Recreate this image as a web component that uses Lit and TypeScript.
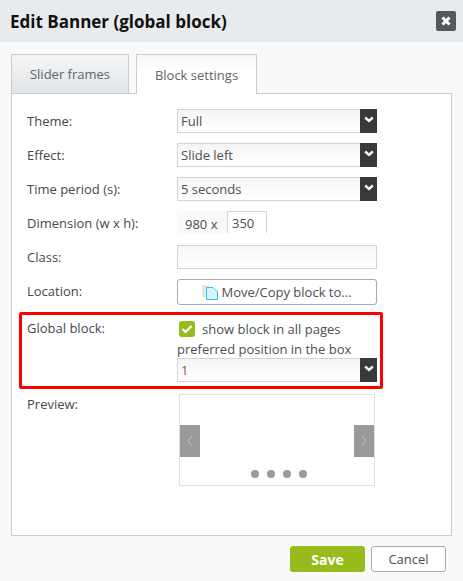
import { LitElement, html, css } from 'lit';
import { customElement } from 'lit/decorators.js';

const chevron = html`<svg width="12" height="8" viewBox="0 0 12 8"><path d="M2.2 1.5 L6 4.8 L9.8 1.5" fill="none" stroke="#fff" stroke-width="2.4"/></svg>`;

@customElement('app-root')
export class AppRoot extends LitElement {
  static styles = css`
    :host {
      display: block;
      width: 463px;
      height: 581px;
      background: #f9f9f9;
      font-family: 'Open Sans', sans-serif;
      font-size: 13px;
      color: #4a4f55;
      overflow: hidden;
    }
    .header {
      height: 42px;
      background: #e8ebee;
      display: flex;
      align-items: center;
      justify-content: space-between;
      padding: 0 7px 0 10px;
    }
    .title {
      font-size: 17px;
      font-weight: 700;
      color: #111;
    }
    .close {
      width: 20px;
      height: 20px;
      background: #54575b;
      border-radius: 2px;
      display: flex;
      align-items: center;
      justify-content: center;
    }
    .tabs {
      display: flex;
      gap: 7px;
      padding: 12px 0 0 11px;
      height: 39px;
    }
    .tab {
      box-sizing: border-box;
      height: 39px;
      border: 1px solid #ccc;
      border-bottom: none;
      display: flex;
      align-items: center;
      justify-content: center;
      font-size: 13px;
      color: #5f646a;
    }
    .tab.off {
      width: 118px;
      background: linear-gradient(#f4f5f6, #e2e5e8);
    }
    .tab.on {
      width: 121px;
      height: 40px;
      background: linear-gradient(#f6f6f6, #fff 40%);
      position: relative;
      z-index: 1;
    }
    .panel {
      box-sizing: border-box;
      margin-left: 11px;
      width: 441px;
      height: 443px;
      background: #fff;
      border: 1px solid #ccc;
      padding: 15px 0 0 15px;
    }
    .row {
      display: flex;
      height: 24px;
      margin-bottom: 10px;
      align-items: center;
    }
    .label {
      width: 150px;
      flex: none;
      color: #44494f;
    }
    .select {
      box-sizing: border-box;
      width: 200px;
      height: 24px;
      border: 1px solid #d4d4d4;
      background: linear-gradient(#f4f4f4, #fff);
      display: flex;
      align-items: center;
      justify-content: space-between;
      padding-left: 3px;
      color: #4a4f55;
    }
    .arrow {
      width: 17px;
      height: 24px;
      margin-right: -1px;
      background: #373a3d;
      display: flex;
      align-items: center;
      justify-content: center;
      padding-bottom: 3px;
      box-sizing: border-box;
    }
    .dim {
      display: flex;
      align-items: stretch;
      align-self: flex-start;
      height: 22px;
    }
    .dim-w {
      width: 50px;
      background: #f9f9f9;
      box-sizing: border-box;
      padding: 4px 0 0 8px;
    }
    .dim-h {
      box-sizing: border-box;
      width: 40px;
      border: 1px solid #d4d4d4;
      border-bottom: none;
      padding: 0 0 0 4px;
      line-height: 22px;
    }
    .input {
      box-sizing: border-box;
      width: 200px;
      height: 24px;
      border: 1px solid #d4d4d4;
      background: linear-gradient(#f6f6f6, #fff);
    }
    .btn-row {
      height: 26px;
      margin-bottom: 0;
    }
    .btn-row .label {
      padding-bottom: 2px;
    }
    .move {
      box-sizing: border-box;
      width: 200px;
      height: 26px;
      border: 1px solid #a4abb8;
      border-radius: 3px;
      display: flex;
      align-items: center;
      justify-content: center;
      gap: 2px;
      background: #fff;
    }
    .global {
      box-sizing: border-box;
      margin: 7px 0 0 -8px;
      width: 364px;
      height: 77px;
      border: 3px solid #f00;
      border-radius: 2px;
      display: flex;
      padding: 0 0 0 5px;
    }
    .global .label {
      padding-top: 4px;
    }
    .check-line {
      display: flex;
      align-items: center;
      gap: 7px;
      padding: 5px 0 0 2px;
      height: 17px;
    }
    .check {
      width: 16px;
      height: 16px;
      background: #95bc1c;
      border-radius: 3px;
      display: flex;
      align-items: center;
      justify-content: center;
    }
    .pref {
      line-height: 18px;
      padding-top: 3px;
    }
    .value {
      color: #9a5a1e;
    }
    .preview {
      display: flex;
      margin-top: 5px;
    }
    .preview .label {
      width: 152px;
      padding-top: 1px;
    }
    .slider {
      box-sizing: border-box;
      width: 196px;
      height: 92px;
      border: 1px solid #e0e0e0;
      position: relative;
    }
    .nav {
      position: absolute;
      top: 30px;
      width: 20px;
      height: 32px;
      background: #9a9a9a;
      display: flex;
      align-items: center;
      justify-content: center;
    }
    .nav.prev {
      left: 0;
    }
    .nav.next {
      right: 0;
    }
    .dots {
      position: absolute;
      left: 71px;
      bottom: 7px;
      display: flex;
      gap: 8px;
    }
    .dots span {
      width: 8px;
      height: 8px;
      border-radius: 50%;
      background: #9a9a9a;
    }
    .footer {
      display: flex;
      justify-content: flex-end;
      gap: 6px;
      padding: 10px 17px 0 0;
    }
    .save,
    .cancel {
      box-sizing: border-box;
      height: 26px;
      display: flex;
      align-items: center;
      justify-content: center;
      border-radius: 3px;
    }
    .save {
      width: 75px;
      background: #95bc1c;
      color: #fff;
      font-weight: 700;
      font-size: 14px;
    }
    .cancel {
      width: 75px;
      background: #fff;
      border: 1px solid #a4abb8;
    }
  `;

  private select(text: string, cls = '') {
    return html`<div class="select">
      <span class=${cls}>${text}</span>
      <span class="arrow">${chevron}</span>
    </div>`;
  }

  render() {
    return html`
      <div class="header">
        <div class="title">Edit Banner (global block)</div>
        <div class="close">
          <svg width="10" height="10" viewBox="0 0 10 10">
            <path d="M1.5 1.5 L8.5 8.5 M8.5 1.5 L1.5 8.5" stroke="#fff" stroke-width="3" />
          </svg>
        </div>
      </div>
      <div class="tabs">
        <div class="tab off">Slider frames</div>
        <div class="tab on">Block settings</div>
      </div>
      <div class="panel">
        <div class="row"><div class="label">Theme:</div>${this.select('Full')}</div>
        <div class="row"><div class="label">Effect:</div>${this.select('Slide left')}</div>
        <div class="row"><div class="label">Time period (s):</div>${this.select('5 seconds')}</div>
        <div class="row">
          <div class="label">Dimension (w x h):</div>
          <div class="dim"><div class="dim-w">980 x</div><div class="dim-h">350</div></div>
        </div>
        <div class="row"><div class="label">Class:</div><div class="input"></div></div>
        <div class="row btn-row">
          <div class="label">Location:</div>
          <div class="move">
            <svg width="17" height="16" viewBox="0 0 17 16">
              <rect x="0" y="1" width="7" height="12" fill="#e6e6e6" />
              <path d="M4.5 3.5 H11 L15.5 8 V15.5 H4.5 Z" fill="#d8f6ff" stroke="#2cc4f0" />
            </svg>
            Move/Copy block to...
          </div>
        </div>
        <div class="global">
          <div class="label">Global block:</div>
          <div>
            <div class="check-line">
              <span class="check">
                <svg width="12" height="10" viewBox="0 0 12 10">
                  <path d="M1.5 5 L4.5 8 L10.5 2" fill="none" stroke="#fff" stroke-width="2" />
                </svg>
              </span>
              show block in all pages
            </div>
            <div class="pref">preferred position in the box</div>
            ${this.select('1', 'value')}
          </div>
        </div>
        <div class="preview">
          <div class="label">Preview:</div>
          <div class="slider">
            <div class="nav prev">
              <svg width="6" height="12" viewBox="0 0 6 12"><path d="M5 1 L1 6 L5 11" fill="none" stroke="#c4c4c4" /></svg>
            </div>
            <div class="nav next">
              <svg width="6" height="12" viewBox="0 0 6 12"><path d="M1 1 L5 6 L1 11" fill="none" stroke="#c4c4c4" /></svg>
            </div>
            <div class="dots"><span></span><span></span><span></span><span></span></div>
          </div>
        </div>
      </div>
      <div class="footer">
        <div class="save">Save</div>
        <div class="cancel">Cancel</div>
      </div>
    `;
  }
}
